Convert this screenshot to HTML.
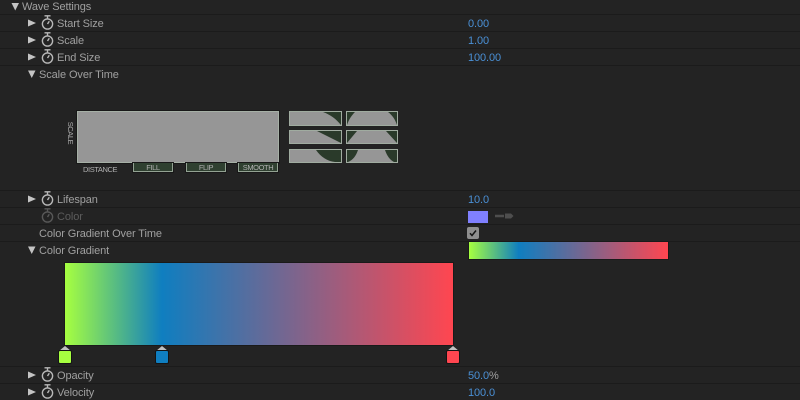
<!DOCTYPE html>
<html><head><meta charset="utf-8"><style>
html,body{margin:0;padding:0;background:#232323}
#r{position:relative;width:800px;height:400px;overflow:hidden;background:#232323;font-family:"Liberation Sans",sans-serif;font-size:11px;letter-spacing:-.1px;color:#a0a0a0}
#r div{position:absolute}
.l{left:0;width:800px;height:1px;background:#1b1b1b}
.t{white-space:nowrap;line-height:14px;height:14px}
.v{color:#4a90d6;left:468px;white-space:nowrap;line-height:14px;height:14px}
.s{font-size:7.5px;letter-spacing:-.4px;color:#b0b0b0;white-space:nowrap;line-height:10px;text-align:center}
.b{background:#2f4030;border:1px solid #93a293;border-top:none;box-shadow:0 0 0 1px #181818;height:9px;top:163px;box-sizing:border-box}
svg{position:absolute;overflow:visible}
</style></head><body><div id="r">
<div class="l" style="top:14px"></div><div class="l" style="top:31px"></div><div class="l" style="top:48px"></div><div class="l" style="top:65px"></div>
<div class="l" style="top:190px"></div><div class="l" style="top:207px"></div><div class="l" style="top:224px"></div><div class="l" style="top:241px"></div>
<div class="l" style="top:366px"></div><div class="l" style="top:383px"></div>

<svg style="left:0;top:0" width="800" height="400">
<g fill="#c4c4c4">
<path d="M11.500 3h7.500l-3.750 7.500z"/>
<path d="M28 19.500v7l8-3.500z"/><path d="M28 36.500v7l8-3.500z"/><path d="M28 53.500v7l8-3.500z"/>
<path d="M28 70.500h7.500l-3.750 7.500z"/>
<path d="M28 195.500v7l8-3.500z"/>
<path d="M28 246.500h7.500l-3.750 7.500z"/>
<path d="M28 371.500v7l8-3.500z"/><path d="M28 388.500v7l8-3.500z"/>
</g>
<g fill="none" stroke="#b8b8b8" stroke-width="1.400">
<g><circle cx="47.500" cy="24" r="5.100"/><path d="M44.500 15.800h6M47.500 16v2.500M47.500 24l1.800-2.800"/></g>
<g transform="translate(0,17)"><circle cx="47.500" cy="24" r="5.100"/><path d="M44.500 15.800h6M47.500 16v2.500M47.500 24l1.800-2.800"/></g>
<g transform="translate(0,34)"><circle cx="47.500" cy="24" r="5.100"/><path d="M44.500 15.800h6M47.500 16v2.500M47.500 24l1.800-2.800"/></g>
<g transform="translate(0,176)"><circle cx="47.500" cy="24" r="5.100"/><path d="M44.500 15.800h6M47.500 16v2.500M47.500 24l1.800-2.800"/></g>
<g transform="translate(0,193)" stroke="#585858"><circle cx="47.500" cy="24" r="5.100"/><path d="M44.500 15.800h6M47.500 16v2.500M47.500 24l1.800-2.800"/></g>
<g transform="translate(0,352)"><circle cx="47.500" cy="24" r="5.100"/><path d="M44.500 15.800h6M47.500 16v2.500M47.500 24l1.800-2.800"/></g>
<g transform="translate(0,369)"><circle cx="47.500" cy="24" r="5.100"/><path d="M44.500 15.800h6M47.500 16v2.500M47.500 24l1.800-2.800"/></g>
</g>
</svg>

<div class="t" style="left:22px;top:0">Wave Settings</div>
<div class="t" style="left:57px;top:17px">Start Size</div>
<div class="t" style="left:57px;top:34px">Scale</div>
<div class="t" style="left:57px;top:51px">End Size</div>
<div class="t" style="left:39px;top:68px">Scale Over Time</div>
<div class="t" style="left:57px;top:193px">Lifespan</div>
<div class="t" style="left:57px;top:210px;color:#5c5c5c">Color</div>
<div class="t" style="left:39px;top:227px">Color Gradient Over Time</div>
<div class="t" style="left:39px;top:244px">Color Gradient</div>
<div class="t" style="left:57px;top:369px">Opacity</div>
<div class="t" style="left:57px;top:386px">Velocity</div>

<div class="v" style="top:17px">0.00</div>
<div class="v" style="top:34px">1.00</div>
<div class="v" style="top:51px">100.00</div>
<div class="v" style="top:193px">10.0</div>
<div class="v" style="top:369px">50.0<span style="color:#a0a0a0">%</span></div>
<div class="v" style="top:386px">100.0</div>

<!-- Scale graph -->
<div style="left:77px;top:111px;width:202px;height:52px;background:#969696;border:1px solid #a6b0a6;box-sizing:border-box;box-shadow:0 0 0 1px #181818"></div>
<div class="s" style="left:55px;top:128px;width:30px;transform:rotate(90deg)">SCALE</div>
<div class="s" style="left:83px;top:165px;width:34px">DISTANCE</div>
<div class="b" style="left:133px;width:40px"></div>
<div class="b" style="left:186px;width:40px"></div>
<div class="b" style="left:238px;width:40px"></div>
<div class="s" style="left:133px;top:163px;width:40px">FILL</div>
<div class="s" style="left:186px;top:163px;width:40px">FLIP</div>
<div class="s" style="left:238px;top:163px;width:40px">SMOOTH</div>

<!-- Curve presets -->
<svg style="left:289px;top:111px" width="110" height="52">
<g stroke="#a0aca0" stroke-width="1">
<rect x=".5" y=".5" width="52" height="14" fill="#969696"/>
<rect x="57.500" y=".5" width="51" height="14" fill="#969696"/>
<rect x=".5" y="19.500" width="52" height="13" fill="#969696"/>
<rect x="57.500" y="19.500" width="51" height="13" fill="#969696"/>
<rect x=".5" y="38.500" width="52" height="13" fill="#969696"/>
<rect x="57.500" y="38.500" width="51" height="13" fill="#969696"/>
</g>
<g fill="#2a3a2a">
<path d="M34 1H52V14C47 8 42 4 34 1Z"/>
<path d="M58 1H66C63 4 60 8 58 14ZM99 1H108V14C106 8 103 4 99 1Z"/>
<path d="M28 20H52V32Z"/>
<path d="M58 20H68L58 32ZM97 20H108V32Z"/>
<path d="M27 39H52V51H46C38 50 32 46 27 39Z"/>
<path d="M58 39H69C67 45 64 49 59 51H58ZM96 39H108V51H105C101 49 98 45 96 39Z"/>
</g>
</svg>

<!-- Color row -->
<div style="left:468px;top:211px;width:20px;height:12px;background:#8080ff"></div>
<svg style="left:494px;top:211px" width="20" height="10"><path d="M1 5H10" stroke="#4e4e4e" stroke-width="2.500" fill="none"/><path d="M11 2.500h6l2.500 2.500-2.500 2.500h-6z" fill="#4e4e4e"/></svg>

<!-- Checkbox -->
<div style="left:467px;top:227px;width:12px;height:12px;background:#8f8f8f;border-radius:2px"></div>
<svg style="left:467px;top:227px" width="12" height="12"><path d="M3 6.200L5 8.500 9 3.500" stroke="#151515" stroke-width="1.500" fill="none"/></svg>

<!-- Gradients -->
<div style="left:468px;top:241px;width:201px;height:19px;box-sizing:border-box;border:1px solid #1a1a1a;background:linear-gradient(90deg,#a6ff40 0%,#0f7ec0 25%,#ff4650 100%)"></div>
<div style="left:64px;top:262px;width:390px;height:84px;box-sizing:border-box;border:1px solid #1a1a1a;background:linear-gradient(90deg,#a6ff40 0%,#0f7ec0 25%,#ff4650 100%)"></div>

<!-- Stops -->
<svg style="left:0;top:345px" width="500" height="22">
<g fill="#c0c0c0"><path d="M65 1l6 5H59z"/><path d="M162 1l6 5h-12z"/><path d="M453 1l6 5h-12z"/></g>
<g stroke="#141414" stroke-width="1">
<rect x="58.500" y="5.500" width="13" height="13" rx="1.500" fill="#a6ff40"/>
<rect x="155.500" y="5.500" width="13" height="13" rx="1.500" fill="#0f7ec0"/>
<rect x="446.500" y="5.500" width="13" height="13" rx="1.500" fill="#ff4650"/>
</g>
</svg>
</div></body></html>
